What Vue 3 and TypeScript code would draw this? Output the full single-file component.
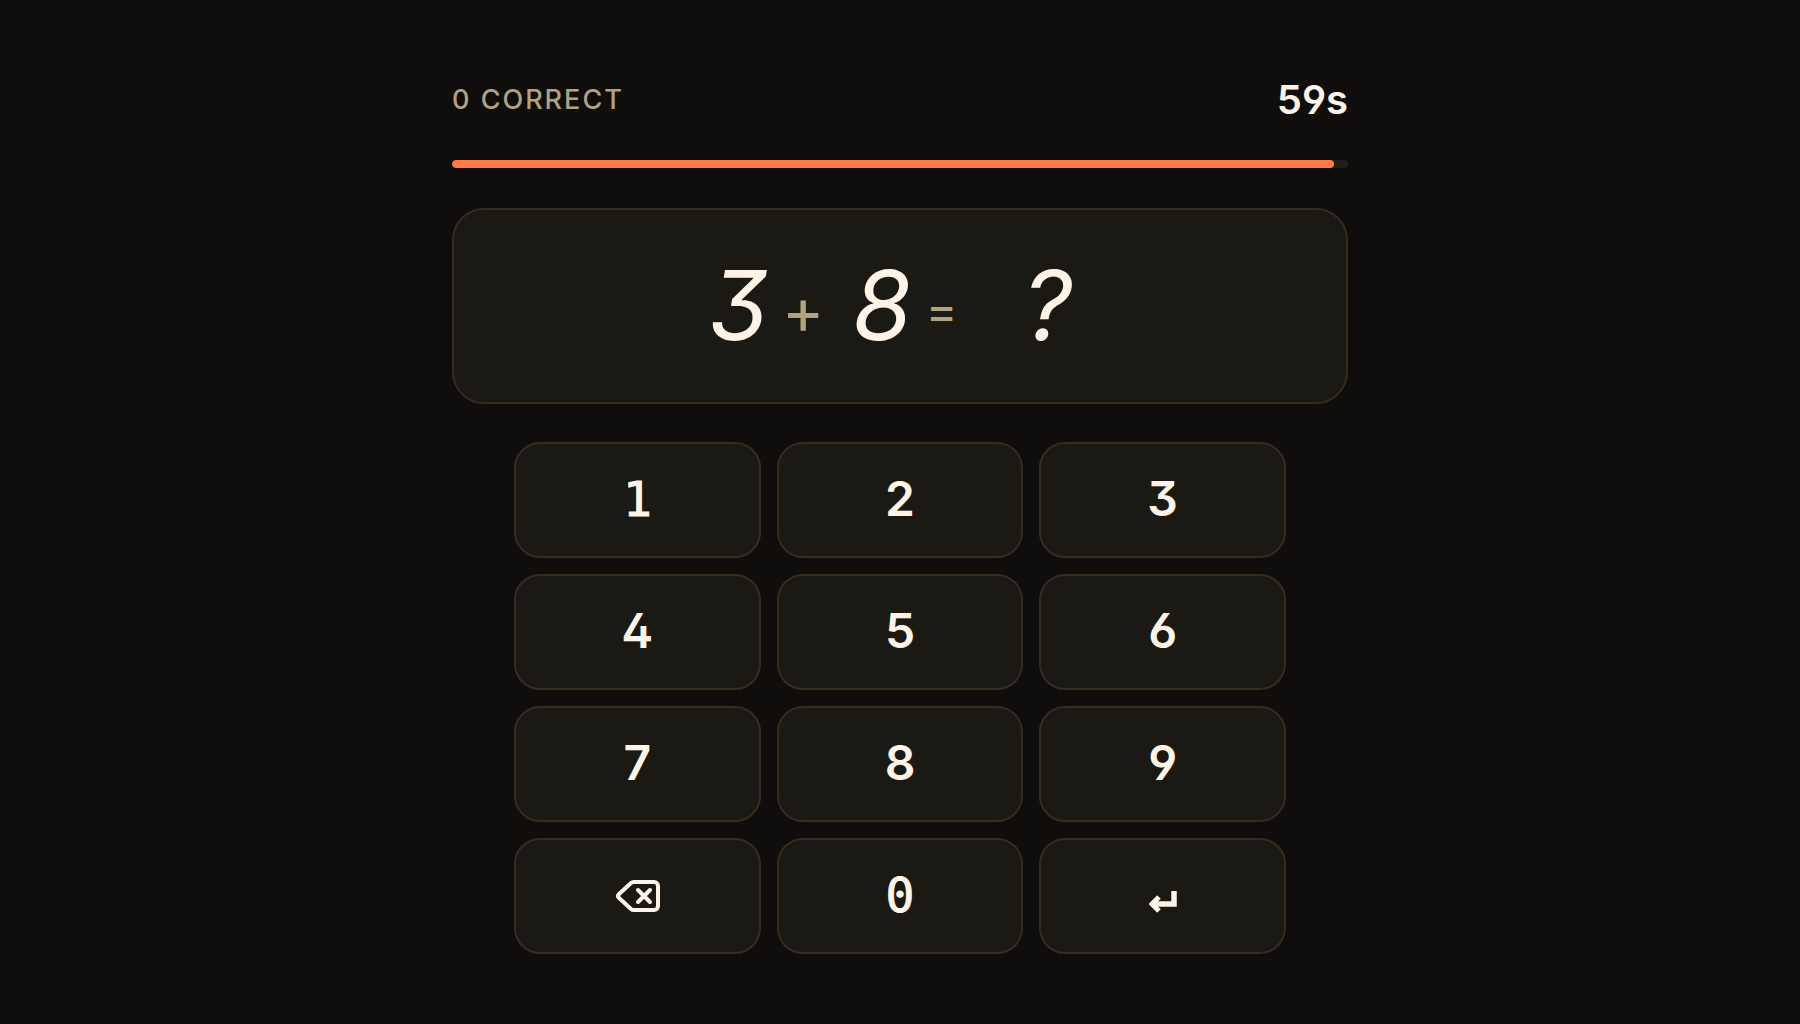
<script setup lang="ts">
import { computed, ref } from 'vue'

const duration = 60
const correct = ref(0)
const left = 3
const right = 8
const secondsLeft = ref(59)
const progress = ref(98.4)
const answer = ref('')

const digits: number[] = [1, 2, 3, 4, 5, 6, 7, 8, 9]
const shown = computed(() => answer.value || '?')

function press(digit: number): void {
  answer.value = (answer.value + digit).slice(0, 2)
}

function erase(): void {
  answer.value = answer.value.slice(0, -1)
}

function submit(): void {
  if (Number(answer.value) === left + right) correct.value += 1
  answer.value = ''
}
</script>

<template>
  <main class="game">
    <header class="status">
      <p class="score">{{ correct }} CORRECT</p>
      <p class="timer">{{ secondsLeft }}s</p>
    </header>

    <div
      class="track"
      role="progressbar"
      aria-label="Time left"
      :aria-valuenow="secondsLeft"
      aria-valuemin="0"
      :aria-valuemax="duration"
    >
      <div class="fill" :style="{ width: progress + '%' }"></div>
    </div>

    <section class="question" aria-label="Question">
      <span class="operand">{{ left }}</span>
      <span class="operator plus">+</span>
      <span class="operand">{{ right }}</span>
      <span class="operator equals">=</span>
      <span class="operand answer">{{ shown }}</span>
    </section>

    <div class="keypad">
      <button v-for="n in digits" :key="n" type="button" class="key digit" :class="{ mono: n === 1 }" @click="press(n)">{{ n }}</button>
      <button type="button" class="key" aria-label="Delete" @click="erase">
        <svg width="48" height="48" viewBox="0 0 48 48" fill="none" stroke="currentColor" stroke-width="4" stroke-linecap="round" stroke-linejoin="round" aria-hidden="true">
          <path d="M21 10H41a4 4 0 0 1 4 4V34a4 4 0 0 1-4 4H21a4 4 0 0 1-3-1L5.600 25.500a2 2 0 0 1 0-3L18 11a4 4 0 0 1 3-1Z" />
          <path d="M25 18 37 30M37 18 25 30" />
        </svg>
      </button>
      <button type="button" class="key digit mono" @click="press(0)">0</button>
      <button type="button" class="key" aria-label="Submit" @click="submit">
        <svg width="28" height="48" viewBox="0 0 28 48" fill="none" stroke="currentColor" stroke-width="5" aria-hidden="true">
          <path d="M25 19V32H4" stroke-width="5.500" />
          <path d="M10 25 3 32 10 39" />
        </svg>
      </button>
    </div>
  </main>
</template>

<style>
body {
  margin: 0;
  background: #0f0e0c;
}
</style>

<style scoped>
.game {
  box-sizing: border-box;
  max-width: 960px;
  min-height: 100vh;
  margin: 0 auto;
  padding: 72px 32px 64px;
  color: #fdf4e7;
  font-family: Inter, "Liberation Sans", sans-serif;
}

.status {
  display: flex;
  align-items: center;
  justify-content: space-between;
  height: 54px;
  margin-bottom: 34px;
}

.score {
  margin: 0;
  color: #b0a384;
  font-size: 27px;
  font-weight: 500;
  letter-spacing: 2px;
}

.timer {
  margin: 0;
  font-size: 40px;
  font-weight: 600;
  font-feature-settings: "ss01", "cv09";
}

.track {
  height: 8px;
  margin-bottom: 40px;
  border-radius: 4px;
  background: #221f19;
  overflow: hidden;
}

.fill {
  height: 100%;
  border-radius: 4px;
  background: #ff7a45;
}

.question {
  box-sizing: border-box;
  display: flex;
  align-items: center;
  justify-content: center;
  gap: 14px;
  min-height: 196px;
  margin-bottom: 38px;
  padding: 32px 32px 34px;
  border: 2px solid #352d1f;
  border-radius: 32px;
  background: #1a1913;
}

.operand {
  font-size: 96px;
  font-style: italic;
  font-weight: 450;
  line-height: 120px;
  font-feature-settings: "ss01", "cv09";
}

.operator {
  padding-top: 10px;
  color: #b0a384;
}

.plus {
  margin-right: 14px;
  font-size: 64px;
}

.equals {
  font-size: 48px;
}

.answer {
  box-sizing: border-box;
  min-width: 120px;
  padding-left: 32px;
  text-align: center;
}

.keypad {
  display: grid;
  grid-template-columns: repeat(3, 1fr);
  gap: 16px;
  max-width: 772px;
  margin: 0 auto;
}

.key {
  display: flex;
  align-items: center;
  justify-content: center;
  box-sizing: border-box;
  height: 116px;
  padding: 0;
  border: 2px solid #352d1f;
  border-radius: 26px;
  background: #1a1913;
  color: inherit;
  cursor: pointer;
}

.digit {
  padding-bottom: 4px;
  font-family: Inter, "Liberation Sans", sans-serif;
  font-size: 48px;
  font-weight: 600;
  font-feature-settings: "ss01", "cv09";
}

.mono {
  padding-bottom: 2px;
  font-family: "DejaVu Sans Mono", monospace;
  font-weight: 400;
  -webkit-text-stroke: 1px currentColor;
}
</style>
